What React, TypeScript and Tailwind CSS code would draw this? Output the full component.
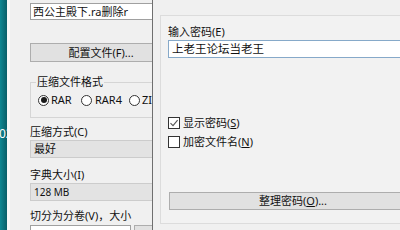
import React from "react";

const font = { fontFamily: '"Noto Sans", "Noto Sans CJK SC", sans-serif' };

function Radio({ checked }: { checked?: boolean }) {
  return (
    <span className="flex h-[11px] w-[11px] shrink-0 items-center justify-center rounded-full border border-[#333333] bg-white">
      {checked && <span className="h-[6px] w-[6px] rounded-full bg-[#1a1a1a]" />}
    </span>
  );
}

function Check({ checked }: { checked?: boolean }) {
  return (
    <span className="flex h-[12px] w-[12px] shrink-0 items-center justify-center border border-[#333333] bg-white">
      {checked && (
        <svg width="10" height="10" viewBox="0 0 10 10">
          <path d="M1.5 5.2 L4 7.6 L8.6 2.2" fill="none" stroke="#555555" strokeWidth="1.1" />
        </svg>
      )}
    </span>
  );
}

export default function App() {
  return (
    <div className="flex h-[230px] w-[400px] overflow-hidden bg-[#f0f0f0] text-[11px] leading-[14px] text-[#111111]" style={font}>
      {/* desktop teal edge */}
      <div className="w-[7px] shrink-0 overflow-hidden bg-gradient-to-r from-[#108893] to-[#0a5f69]">
        <div className="ml-[-1px] whitespace-nowrap pt-[127px] text-[12px] text-white">02</div>
      </div>
      <div className="w-[3px] shrink-0 bg-[#f8f8f8]" />

      {/* left dialog */}
      <div className="flex w-[142px] shrink-0 flex-col overflow-hidden pl-[20px] pt-[3px]">
        <div className="flex h-[17px] w-[150px] shrink-0 items-center border border-[#a0a0a0] bg-white pl-[2px] whitespace-nowrap">
          西公主殿下.ra删除r
        </div>
        <div className="mt-[23px] flex h-[19px] w-[142px] shrink-0 items-center justify-center border border-[#adadad] bg-[#e1e1e1] whitespace-nowrap">
          配置文件(F)...
        </div>
        <fieldset className="mt-[13px] w-[150px] shrink-0 border border-[#d5d5d5] px-[5px] pb-[10px]">
          <legend className="px-[1px] leading-[14px]">压缩文件格式</legend>
          <div className="mt-[4px] flex h-[14px] items-center whitespace-nowrap pl-[2px]">
            <div className="flex w-[43px] shrink-0 items-center gap-[2px]">
              <Radio checked />
              <span>RAR</span>
            </div>
            <div className="flex w-[48px] shrink-0 items-center gap-[3px]">
              <Radio />
              <span>RAR4</span>
            </div>
            <div className="flex shrink-0 items-center gap-[2px]">
              <Radio />
              <span>ZIP</span>
            </div>
          </div>
        </fieldset>
        <div className="mt-[7px] h-[14px] shrink-0 whitespace-nowrap">压缩方式(C)</div>
        <div className="mt-[1px] flex h-[18px] w-[150px] shrink-0 items-center border border-[#cccccc] bg-[#e3e3e3] pl-[3px] whitespace-nowrap">
          最好
        </div>
        <div className="mt-[10px] h-[14px] shrink-0 whitespace-nowrap">字典大小(I)</div>
        <div className="mt-[1px] flex h-[18px] w-[150px] shrink-0 items-center border border-[#cccccc] bg-[#e3e3e3] pl-[3px] text-[10px] whitespace-nowrap">
          128 MB
        </div>
        <div className="mt-[8px] h-[14px] shrink-0 whitespace-nowrap">切分为分卷(V)，大小</div>
        <div className="mt-[2px] flex shrink-0 gap-[3px]">
          <div className="h-[18px] w-[101px] shrink-0 border border-[#a0a0a0] bg-white" />
          <div className="h-[18px] w-[40px] shrink-0 border border-[#adadad] bg-[#e1e1e1]" />
        </div>
      </div>

      {/* divider */}
      <div className="w-[1px] shrink-0 bg-[#6f6f6f]" />

      {/* right dialog */}
      <div className="flex flex-1 flex-col overflow-hidden bg-[#f0f0f0]">
        <div className="h-[15px] shrink-0" />
        <div className="ml-[7px] flex w-[260px] shrink-0 flex-col border-l border-t border-b border-[#dcdcdc] bg-[#f2f2f2] pl-[7px] pb-[13px]">
          <div className="mt-[9px] h-[14px] whitespace-nowrap">输入密码(E)</div>
          <div className="mt-[1px] flex h-[18px] w-[260px] items-center border border-[#86a9c9] bg-white pl-[3px] text-[11.5px] whitespace-nowrap">
            上老王论坛当老王
          </div>
          <div className="mt-[58px] flex h-[14px] items-center gap-[3px] whitespace-nowrap">
            <Check checked />
            <span>显示密码(<span className="underline">S</span>)</span>
          </div>
          <div className="mt-[5px] flex h-[14px] items-center gap-[3px] whitespace-nowrap">
            <Check />
            <span>加密文件名(<span className="underline">N</span>)</span>
          </div>
          <div className="ml-[1px] mt-[43px] flex h-[18px] w-[248px] items-center justify-center border border-[#adadad] bg-[#e1e1e1] whitespace-nowrap">
            整理密码(<span className="underline">O</span>)...
          </div>
        </div>
      </div>
    </div>
  );
}
